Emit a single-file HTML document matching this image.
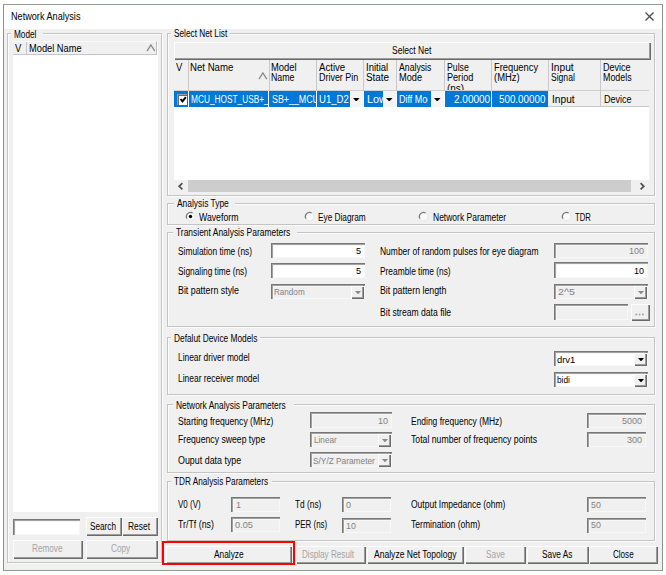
<!DOCTYPE html>
<html><head><meta charset="utf-8"><style>
html,body{margin:0;padding:0;background:#fff;width:666px;height:575px;overflow:hidden;position:relative}
.a{position:absolute;box-sizing:border-box}
.t{position:absolute;font-family:"Liberation Sans",sans-serif;font-size:9.5px;line-height:10px;white-space:nowrap;transform-origin:0 0}
</style></head><body>
<div class="a" style="left:3px;top:4px;width:660px;height:567px;border:1px solid #969f92;border-left-color:#7f978a;border-bottom-color:#919c8e;border-right-color:#8a948a;background:#f0f0f0;"></div>
<div class="a" style="left:4px;top:5px;width:658px;height:24px;background:#fff;"></div>
<div class="t" style="left:10.80px;top:12.40px;color:#000;transform:scaleX(0.9122);font-size:10.0px">Network Analysis</div>
<svg class="a" style="left:644px;top:11px" width="11" height="11"><path d="M1.5 1.5L9.5 9.5M9.5 1.5L1.5 9.5" stroke="#4a4a4a" stroke-width="1.25"/></svg>
<div class="a" style="left:7px;top:33px;width:155px;height:530px;border:1px solid #c4c4c4;box-shadow:inset 1px 1px 0 #fcfcfc,1px 1px 0 #fcfcfc;"></div>
<div class="a" style="left:10.9px;top:32px;width:32.1px;height:4px;background:#f0f0f0;"></div>
<div class="t" style="left:13.90px;top:29.70px;color:#000;transform:scaleX(0.8223);font-size:10.0px">Model</div>
<div class="a" style="left:13px;top:41px;width:145px;height:471px;background:#fff;"></div>
<div class="a" style="left:13px;top:41px;width:144px;height:14px;background:#f0f0f0;border-top:1px solid #fafafa;border-bottom:1px solid #c6c6c6;border-right:1px solid #bdbdbd;"></div>
<div class="a" style="left:26px;top:42px;width:1px;height:13px;background:#c4c4c4;"></div>
<div class="t" style="left:14.80px;top:44.00px;color:#000;transform:scaleX(0.9500);font-size:10.0px">V</div>
<div class="t" style="left:29.30px;top:44.00px;color:#000;transform:scaleX(0.9275);font-size:10.0px">Model Name</div>
<svg class="a" style="left:146px;top:44px" width="10" height="8"><path d="M1 7.2L4.9 0.9L8.8 7.2" stroke="#8a8a8a" stroke-width="1.3" fill="none"/></svg>
<div class="a" style="left:13px;top:519px;width:67px;height:16px;background:#fff;box-shadow:inset 1px 1px 0 #777,inset 2px 2px 0 #a2a2a2,inset 3px 3px 0 #f7f7f7,inset -1px -1px 0 #f8f8f8;"></div>
<div class="a" style="left:86px;top:517px;width:36px;height:19px;background:#f0f0f0;box-shadow:inset 1px 1px 0 #fdfdfd,inset -1px -1px 0 #6a6a6a,inset -2px -2px 0 #9c9c9c;"></div>
<div class="t" style="left:90.30px;top:521.70px;color:#000;transform:scaleX(0.8188);font-size:10.0px">Search</div>
<div class="a" style="left:122px;top:517px;width:36px;height:19px;background:#f0f0f0;box-shadow:inset 1px 1px 0 #fdfdfd,inset -1px -1px 0 #6a6a6a,inset -2px -2px 0 #9c9c9c;"></div>
<div class="t" style="left:127.90px;top:521.70px;color:#000;transform:scaleX(0.8414);font-size:10.0px">Reset</div>
<div class="a" style="left:13px;top:540px;width:70px;height:19px;background:#f0f0f0;box-shadow:inset 1px 1px 0 #fdfdfd,inset -1px -1px 0 #6a6a6a,inset -2px -2px 0 #9c9c9c;"></div>
<div class="t" style="left:31.70px;top:544.30px;color:#a4a4a4;transform:scaleX(0.8176);font-size:10.0px">Remove</div>
<div class="a" style="left:86px;top:540px;width:72px;height:19px;background:#f0f0f0;box-shadow:inset 1px 1px 0 #fdfdfd,inset -1px -1px 0 #6a6a6a,inset -2px -2px 0 #9c9c9c;"></div>
<div class="t" style="left:110.80px;top:544.30px;color:#a4a4a4;transform:scaleX(0.8218);font-size:10.0px">Copy</div>
<div class="a" style="left:167px;top:33px;width:488px;height:163px;border:1px solid #c4c4c4;box-shadow:inset 1px 1px 0 #fcfcfc,1px 1px 0 #fcfcfc;"></div>
<div class="a" style="left:171.2px;top:32px;width:58.80000000000001px;height:4px;background:#f0f0f0;"></div>
<div class="t" style="left:174.20px;top:29.20px;color:#000;transform:scaleX(0.8250);font-size:10.0px">Select Net List</div>
<div class="a" style="left:174px;top:42px;width:475px;height:138px;background:#fff;"></div>
<div class="a" style="left:174px;top:42px;width:477px;height:18px;background:#f0f0f0;box-shadow:inset 1px 1px 0 #fdfdfd,inset -1px -1px 0 #6a6a6a,inset -2px -2px 0 #9c9c9c;"></div>
<div class="t" style="left:391.90px;top:46.30px;color:#000;transform:scaleX(0.8514);font-size:10.0px">Select Net</div>
<div class="a" style="left:174px;top:60px;width:475px;height:31px;background:#f0f0f0;border-bottom:1px solid #cfcfcf;"></div>
<div class="a" style="left:188px;top:60px;width:1px;height:31px;background:#c8c8c8;"></div>
<div class="a" style="left:269px;top:60px;width:1px;height:31px;background:#c8c8c8;"></div>
<div class="a" style="left:316px;top:60px;width:1px;height:31px;background:#c8c8c8;"></div>
<div class="a" style="left:363px;top:60px;width:1px;height:31px;background:#c8c8c8;"></div>
<div class="a" style="left:396px;top:60px;width:1px;height:31px;background:#c8c8c8;"></div>
<div class="a" style="left:444px;top:60px;width:1px;height:31px;background:#c8c8c8;"></div>
<div class="a" style="left:491px;top:60px;width:1px;height:31px;background:#c8c8c8;"></div>
<div class="a" style="left:548px;top:60px;width:1px;height:31px;background:#c8c8c8;"></div>
<div class="a" style="left:600px;top:60px;width:1px;height:31px;background:#c8c8c8;"></div>
<div class="t" style="left:176.00px;top:62.60px;color:#000;transform:scaleX(0.9500);font-size:10.0px">V</div>
<div class="t" style="left:190.20px;top:62.60px;color:#000;transform:scaleX(0.9616);font-size:10.0px">Net Name</div>
<svg class="a" style="left:258px;top:71.5px" width="10" height="8"><path d="M1 7.2L4.9 0.9L8.8 7.2" stroke="#8a8a8a" stroke-width="1.3" fill="none"/></svg>
<div class="t" style="left:271.30px;top:62.60px;color:#000;transform:scaleX(0.9403);font-size:10.0px">Model</div>
<div class="t" style="left:271.30px;top:73.10px;color:#000;transform:scaleX(0.8796);font-size:10.0px">Name</div>
<div class="t" style="left:318.90px;top:62.60px;color:#000;transform:scaleX(0.9616);font-size:10.0px">Active</div>
<div class="t" style="left:318.90px;top:73.10px;color:#000;transform:scaleX(0.8945);font-size:10.0px">Driver Pin</div>
<div class="t" style="left:366.20px;top:62.60px;color:#000;transform:scaleX(0.9514);font-size:10.0px">Initial</div>
<div class="t" style="left:366.20px;top:73.10px;color:#000;transform:scaleX(0.9891);font-size:10.0px">State</div>
<div class="t" style="left:399.20px;top:62.60px;color:#000;transform:scaleX(0.8693);font-size:10.0px">Analysis</div>
<div class="t" style="left:399.20px;top:73.10px;color:#000;transform:scaleX(0.9225);font-size:10.0px">Mode</div>
<div class="t" style="left:446.80px;top:62.60px;color:#000;transform:scaleX(0.8699);font-size:10.0px">Pulse</div>
<div class="t" style="left:446.80px;top:73.10px;color:#000;transform:scaleX(0.9088);font-size:10.0px">Period</div>
<div class="t" style="left:493.80px;top:62.60px;color:#000;transform:scaleX(0.9324);font-size:10.0px">Frequency</div>
<div class="t" style="left:493.80px;top:73.10px;color:#000;transform:scaleX(0.9431);font-size:10.0px">(MHz)</div>
<div class="t" style="left:550.80px;top:62.60px;color:#000;transform:scaleX(1.0168);font-size:10.0px">Input</div>
<div class="t" style="left:550.80px;top:73.10px;color:#000;transform:scaleX(0.8562);font-size:10.0px">Signal</div>
<div class="t" style="left:602.80px;top:62.60px;color:#000;transform:scaleX(0.9019);font-size:10.0px">Device</div>
<div class="t" style="left:602.80px;top:73.10px;color:#000;transform:scaleX(0.8862);font-size:10.0px">Models</div>
<div class="a" style="left:445px;top:60px;width:46px;height:30px;overflow:hidden"><div class="t" style="left:1.80px;top:23.60px;color:#000;transform:scaleX(0.9971);font-size:10.0px">(ns)</div></div>
<div class="a" style="left:174px;top:91px;width:14px;height:16px;background:#0078d7;"></div>
<div class="a" style="left:177px;top:94px;width:10px;height:11px;background:#fff;box-shadow:inset 1px 1px 0 #9a9a9a,inset 2px 2px 0 #6a6a6a;"></div>
<svg class="a" style="left:178.5px;top:95px" width="9" height="9"><path d="M1.5 4L3.5 6.4L6.8 2.2" stroke="#000" stroke-width="1.9" fill="none"/></svg>
<div class="a" style="left:189px;top:91px;width:79px;height:16px;background:#0078d7;"></div>
<div class="a" style="left:189px;top:91px;width:79px;height:16px;overflow:hidden"><div class="t" style="left:1.60px;top:4.20px;color:#fff;transform:scaleX(0.8292);font-size:10.0px">MCU_HOST_USB+_DP</div></div>
<div class="a" style="left:269px;top:91px;width:47px;height:16px;background:#0078d7;"></div>
<div class="a" style="left:269px;top:91px;width:47px;height:16px;overflow:hidden"><div class="t" style="left:2.80px;top:4.20px;color:#fff;transform:scaleX(0.8848);font-size:10.0px">SB+__MCU_HOST</div></div>
<div class="a" style="left:317px;top:91px;width:33px;height:16px;background:#0078d7;"></div>
<div class="a" style="left:317px;top:91px;width:33px;height:16px;overflow:hidden"><div class="t" style="left:1.50px;top:4.20px;color:#fff;transform:scaleX(0.9536);font-size:10.0px">U1_D2</div></div>
<div class="a" style="left:364px;top:91px;width:19px;height:16px;background:#0078d7;"></div>
<div class="a" style="left:364px;top:91px;width:19px;height:16px;overflow:hidden"><div class="t" style="left:2.80px;top:4.20px;color:#fff;transform:scaleX(1.0809);font-size:10.0px">Low</div></div>
<div class="a" style="left:397px;top:91px;width:34px;height:16px;background:#0078d7;"></div>
<div class="a" style="left:397px;top:91px;width:31px;height:16px;overflow:hidden"><div class="t" style="left:2.20px;top:4.20px;color:#fff;transform:scaleX(0.8977);font-size:10.0px">Diff Mode</div></div>
<div class="a" style="left:445px;top:91px;width:46px;height:16px;background:#0078d7;"></div>
<div class="t" style="left:453.70px;top:95.20px;color:#fff;transform:scaleX(0.9986);font-size:10.0px">2.00000</div>
<div class="a" style="left:492px;top:91px;width:56px;height:16px;background:#0078d7;"></div>
<div class="t" style="left:499.30px;top:95.20px;color:#fff;transform:scaleX(0.9814);font-size:10.0px">500.00000</div>
<div class="a" style="left:350px;top:91px;width:13px;height:16px;background:#f4f4f4;"></div>
<svg class="a" style="left:353.25px;top:97.80px" width="6.5" height="3.6"><path d="M0 0H6.5L3.25 3.6Z" fill="#000"/></svg>
<div class="a" style="left:383px;top:91px;width:13px;height:16px;background:#f4f4f4;"></div>
<svg class="a" style="left:386.25px;top:97.80px" width="6.5" height="3.6"><path d="M0 0H6.5L3.25 3.6Z" fill="#000"/></svg>
<div class="a" style="left:431px;top:91px;width:13px;height:16px;background:#f4f4f4;"></div>
<svg class="a" style="left:434.25px;top:97.80px" width="6.5" height="3.6"><path d="M0 0H6.5L3.25 3.6Z" fill="#000"/></svg>
<div class="a" style="left:548px;top:91px;width:101px;height:16px;background:#f0f0f0;border-bottom:1px solid #c8c8c8;"></div>
<div class="a" style="left:600px;top:91px;width:1px;height:16px;background:#c8c8c8;"></div>
<div class="t" style="left:552.30px;top:95.20px;color:#000;transform:scaleX(1.0168);font-size:10.0px">Input</div>
<div class="t" style="left:604.30px;top:95.20px;color:#000;transform:scaleX(0.9019);font-size:10.0px">Device</div>
<div class="a" style="left:174px;top:180px;width:475px;height:12px;background:#f0f0f0;"></div>
<div class="a" style="left:188px;top:180px;width:443px;height:12px;background:#cdcdcd;"></div>
<svg class="a" style="left:177px;top:182px" width="8" height="9"><path d="M5.4 1.2L2.2 4.3L5.4 7.4" stroke="#505050" stroke-width="1.7" fill="none"/></svg>
<svg class="a" style="left:638px;top:182px" width="8" height="9"><path d="M2.6 1.2L5.8 4.3L2.6 7.4" stroke="#505050" stroke-width="1.7" fill="none"/></svg>
<div class="a" style="left:167px;top:203px;width:488px;height:22px;border:1px solid #c4c4c4;box-shadow:inset 1px 1px 0 #fcfcfc,1px 1px 0 #fcfcfc;"></div>
<div class="a" style="left:173.6px;top:202px;width:61.900000000000006px;height:4px;background:#f0f0f0;"></div>
<div class="t" style="left:176.60px;top:199.00px;color:#000;transform:scaleX(0.8421);font-size:10.0px">Analysis Type</div>
<svg class="a" style="left:184.90px;top:210.90px" width="11" height="11"><circle cx="5.5" cy="5.5" r="4.3" fill="#fafafa" stroke="#e8e8e8" stroke-width="1"/><path d="M2.0 7.6A4.1 4.1 0 0 1 7.6 2.0" stroke="#7a7a7a" stroke-width="1.3" fill="none"/><circle cx="5.5" cy="5.5" r="1.7" fill="#000"/></svg>
<div class="t" style="left:199.30px;top:212.50px;color:#000;transform:scaleX(0.8723);font-size:10.0px">Waveform</div>
<svg class="a" style="left:303.50px;top:210.90px" width="11" height="11"><circle cx="5.5" cy="5.5" r="4.3" fill="#fafafa" stroke="#e8e8e8" stroke-width="1"/><path d="M2.0 7.6A4.1 4.1 0 0 1 7.6 2.0" stroke="#7a7a7a" stroke-width="1.3" fill="none"/></svg>
<div class="t" style="left:317.50px;top:212.50px;color:#000;transform:scaleX(0.8257);font-size:10.0px">Eye Diagram</div>
<svg class="a" style="left:418.10px;top:210.90px" width="11" height="11"><circle cx="5.5" cy="5.5" r="4.3" fill="#fafafa" stroke="#e8e8e8" stroke-width="1"/><path d="M2.0 7.6A4.1 4.1 0 0 1 7.6 2.0" stroke="#7a7a7a" stroke-width="1.3" fill="none"/></svg>
<div class="t" style="left:432.50px;top:212.50px;color:#000;transform:scaleX(0.8492);font-size:10.0px">Network Parameter</div>
<svg class="a" style="left:560.60px;top:210.90px" width="11" height="11"><circle cx="5.5" cy="5.5" r="4.3" fill="#fafafa" stroke="#e8e8e8" stroke-width="1"/><path d="M2.0 7.6A4.1 4.1 0 0 1 7.6 2.0" stroke="#7a7a7a" stroke-width="1.3" fill="none"/></svg>
<div class="t" style="left:574.60px;top:212.50px;color:#000;transform:scaleX(0.7682);font-size:10.0px">TDR</div>
<div class="a" style="left:167px;top:232px;width:488px;height:95px;border:1px solid #c4c4c4;box-shadow:inset 1px 1px 0 #fcfcfc,1px 1px 0 #fcfcfc;"></div>
<div class="a" style="left:173.3px;top:231px;width:124.19999999999999px;height:4px;background:#f0f0f0;"></div>
<div class="t" style="left:176.30px;top:228.40px;color:#000;transform:scaleX(0.8445);font-size:10.0px">Transient Analysis Parameters</div>
<div class="t" style="left:178.00px;top:247.00px;color:#000;transform:scaleX(0.8380);font-size:10.0px">Simulation time (ns)</div>
<div class="t" style="left:177.80px;top:267.00px;color:#000;transform:scaleX(0.8337);font-size:10.0px">Signaling time (ns)</div>
<div class="t" style="left:178.20px;top:285.90px;color:#000;transform:scaleX(0.8845);font-size:10.0px">Bit pattern style</div>
<div class="a" style="left:271px;top:243px;width:94px;height:15px;background:#fff;box-shadow:inset 1px 1px 0 #777,inset 2px 2px 0 #a2a2a2,inset 3px 3px 0 #f7f7f7,inset -1px -1px 0 #f8f8f8;"></div>
<div class="t" style="left:356.05px;top:246.37px;color:#000;transform:scaleX(0.9500)">5</div>
<div class="a" style="left:271px;top:263px;width:94px;height:15px;background:#fff;box-shadow:inset 1px 1px 0 #777,inset 2px 2px 0 #a2a2a2,inset 3px 3px 0 #f7f7f7,inset -1px -1px 0 #f8f8f8;"></div>
<div class="t" style="left:356.05px;top:265.97px;color:#000;transform:scaleX(0.9500)">5</div>
<div class="a" style="left:271px;top:284px;width:94px;height:15px;background:#f0f0f0;box-shadow:inset 1px 1px 0 #777,inset 2px 2px 0 #a2a2a2,inset 3px 3px 0 #f7f7f7,inset -1px -1px 0 #f8f8f8;"></div>
<div class="a" style="left:351px;top:286px;width:13px;height:13px;background:#f0f0f0;box-shadow:inset 1px 1px 0 #fdfdfd,inset -1px -1px 0 #6a6a6a,inset -2px -2px 0 #9c9c9c;"></div>
<div class="a" style="left:363px;top:284px;width:1px;height:2px;background:#777;"></div>
<svg class="a" style="left:354.80px;top:291.00px" width="6.0" height="3.4"><path d="M0 0H6.0L3.0 3.4Z" fill="#8a8a8a"/></svg>
<div class="t" style="left:273.80px;top:287.47px;color:#828282;transform:scaleX(0.8529)">Random</div>
<div class="t" style="left:379.50px;top:246.90px;color:#000;transform:scaleX(0.8468);font-size:10.0px">Number of random pulses for eye diagram</div>
<div class="t" style="left:379.60px;top:267.20px;color:#000;transform:scaleX(0.8363);font-size:10.0px">Preamble time (ns)</div>
<div class="t" style="left:379.60px;top:286.00px;color:#000;transform:scaleX(0.8777);font-size:10.0px">Bit pattern length</div>
<div class="t" style="left:379.60px;top:307.70px;color:#000;transform:scaleX(0.8592);font-size:10.0px">Bit stream data file</div>
<div class="a" style="left:554px;top:243px;width:94px;height:15px;background:#f0f0f0;box-shadow:inset 1px 1px 0 #777,inset 2px 2px 0 #a2a2a2,inset 3px 3px 0 #f7f7f7,inset -1px -1px 0 #f8f8f8;"></div>
<div class="t" style="left:628.81px;top:246.27px;color:#828282;transform:scaleX(0.9500)">100</div>
<div class="a" style="left:554px;top:262px;width:94px;height:16px;background:#fff;box-shadow:inset 1px 1px 0 #777,inset 2px 2px 0 #a2a2a2,inset 3px 3px 0 #f7f7f7,inset -1px -1px 0 #f8f8f8;"></div>
<div class="t" style="left:633.83px;top:266.07px;color:#000;transform:scaleX(0.9500)">10</div>
<div class="a" style="left:554px;top:284px;width:94px;height:15px;background:#f0f0f0;box-shadow:inset 1px 1px 0 #777,inset 2px 2px 0 #a2a2a2,inset 3px 3px 0 #f7f7f7,inset -1px -1px 0 #f8f8f8;"></div>
<div class="a" style="left:634px;top:286px;width:13px;height:13px;background:#f0f0f0;box-shadow:inset 1px 1px 0 #fdfdfd,inset -1px -1px 0 #6a6a6a,inset -2px -2px 0 #9c9c9c;"></div>
<div class="a" style="left:646px;top:284px;width:1px;height:2px;background:#777;"></div>
<svg class="a" style="left:637.80px;top:291.00px" width="6.0" height="3.4"><path d="M0 0H6.0L3.0 3.4Z" fill="#8a8a8a"/></svg>
<div class="t" style="left:558.00px;top:287.47px;color:#828282;transform:scaleX(1.1193)">2^5</div>
<div class="a" style="left:554px;top:304px;width:74px;height:16px;background:#f0f0f0;box-shadow:inset 1px 1px 0 #777,inset 2px 2px 0 #a2a2a2,inset 3px 3px 0 #f7f7f7,inset -1px -1px 0 #f8f8f8;"></div>
<div class="a" style="left:631px;top:304px;width:19px;height:17px;background:#f0f0f0;box-shadow:inset 1px 1px 0 #fdfdfd,inset -1px -1px 0 #6a6a6a,inset -2px -2px 0 #9c9c9c;"></div>
<svg class="a" style="left:634px;top:312px" width="12" height="5"><circle cx="2.3" cy="2.5" r="0.95" fill="#a4a4a4"/><circle cx="5.6" cy="2.5" r="0.95" fill="#a4a4a4"/><circle cx="8.9" cy="2.5" r="0.95" fill="#a4a4a4"/></svg>
<div class="a" style="left:167px;top:337px;width:488px;height:58px;border:1px solid #c4c4c4;box-shadow:inset 1px 1px 0 #fcfcfc,1px 1px 0 #fcfcfc;"></div>
<div class="a" style="left:170.6px;top:336px;width:89.4px;height:4px;background:#f0f0f0;"></div>
<div class="t" style="left:173.60px;top:333.60px;color:#000;transform:scaleX(0.8334);font-size:10.0px">Defalut Device Models</div>
<div class="t" style="left:178.10px;top:352.90px;color:#000;transform:scaleX(0.8376);font-size:10.0px">Linear driver model</div>
<div class="t" style="left:178.10px;top:374.40px;color:#000;transform:scaleX(0.8434);font-size:10.0px">Linear receiver model</div>
<div class="a" style="left:554px;top:351px;width:94px;height:15px;background:#fff;box-shadow:inset 1px 1px 0 #777,inset 2px 2px 0 #a2a2a2,inset 3px 3px 0 #f7f7f7,inset -1px -1px 0 #f8f8f8;"></div>
<div class="a" style="left:634px;top:353px;width:13px;height:13px;background:#f0f0f0;box-shadow:inset 1px 1px 0 #fdfdfd,inset -1px -1px 0 #6a6a6a,inset -2px -2px 0 #9c9c9c;"></div>
<div class="a" style="left:646px;top:351px;width:1px;height:2px;background:#777;"></div>
<svg class="a" style="left:637.80px;top:358.00px" width="6.0" height="3.4"><path d="M0 0H6.0L3.0 3.4Z" fill="#000"/></svg>
<div class="t" style="left:556.50px;top:355.17px;color:#000;transform:scaleX(0.9892)">drv1</div>
<div class="a" style="left:554px;top:372px;width:94px;height:15px;background:#fff;box-shadow:inset 1px 1px 0 #777,inset 2px 2px 0 #a2a2a2,inset 3px 3px 0 #f7f7f7,inset -1px -1px 0 #f8f8f8;"></div>
<div class="a" style="left:634px;top:374px;width:13px;height:13px;background:#f0f0f0;box-shadow:inset 1px 1px 0 #fdfdfd,inset -1px -1px 0 #6a6a6a,inset -2px -2px 0 #9c9c9c;"></div>
<div class="a" style="left:646px;top:372px;width:1px;height:2px;background:#777;"></div>
<svg class="a" style="left:637.80px;top:379.00px" width="6.0" height="3.4"><path d="M0 0H6.0L3.0 3.4Z" fill="#000"/></svg>
<div class="t" style="left:556.50px;top:374.97px;color:#000;transform:scaleX(0.8721)">bidi</div>
<div class="a" style="left:167px;top:404px;width:488px;height:69px;border:1px solid #c4c4c4;box-shadow:inset 1px 1px 0 #fcfcfc,1px 1px 0 #fcfcfc;"></div>
<div class="a" style="left:173.3px;top:403px;width:120.69999999999999px;height:4px;background:#f0f0f0;"></div>
<div class="t" style="left:176.30px;top:400.50px;color:#000;transform:scaleX(0.8401);font-size:10.0px">Network Analysis Parameters</div>
<div class="t" style="left:177.80px;top:417.30px;color:#000;transform:scaleX(0.8587);font-size:10.0px">Starting frequency (MHz)</div>
<div class="t" style="left:177.80px;top:435.30px;color:#000;transform:scaleX(0.8673);font-size:10.0px">Frequency sweep type</div>
<div class="t" style="left:177.80px;top:455.50px;color:#000;transform:scaleX(0.8890);font-size:10.0px">Ouput data type</div>
<div class="a" style="left:310px;top:412px;width:82px;height:16px;background:#f0f0f0;box-shadow:inset 1px 1px 0 #777,inset 2px 2px 0 #a2a2a2,inset 3px 3px 0 #f7f7f7,inset -1px -1px 0 #f8f8f8;"></div>
<div class="t" style="left:378.03px;top:416.07px;color:#828282;transform:scaleX(0.9500)">10</div>
<div class="a" style="left:310px;top:432px;width:82px;height:15px;background:#f0f0f0;box-shadow:inset 1px 1px 0 #777,inset 2px 2px 0 #a2a2a2,inset 3px 3px 0 #f7f7f7,inset -1px -1px 0 #f8f8f8;"></div>
<div class="a" style="left:378px;top:434px;width:13px;height:13px;background:#f0f0f0;box-shadow:inset 1px 1px 0 #fdfdfd,inset -1px -1px 0 #6a6a6a,inset -2px -2px 0 #9c9c9c;"></div>
<div class="a" style="left:390px;top:432px;width:1px;height:2px;background:#777;"></div>
<svg class="a" style="left:381.80px;top:439.00px" width="6.0" height="3.4"><path d="M0 0H6.0L3.0 3.4Z" fill="#8a8a8a"/></svg>
<div class="t" style="left:313.80px;top:434.67px;color:#828282;transform:scaleX(0.8611)">Linear</div>
<div class="a" style="left:310px;top:452px;width:82px;height:15px;background:#f0f0f0;box-shadow:inset 1px 1px 0 #777,inset 2px 2px 0 #a2a2a2,inset 3px 3px 0 #f7f7f7,inset -1px -1px 0 #f8f8f8;"></div>
<div class="a" style="left:378px;top:454px;width:13px;height:13px;background:#f0f0f0;box-shadow:inset 1px 1px 0 #fdfdfd,inset -1px -1px 0 #6a6a6a,inset -2px -2px 0 #9c9c9c;"></div>
<div class="a" style="left:390px;top:452px;width:1px;height:2px;background:#777;"></div>
<svg class="a" style="left:381.80px;top:459.00px" width="6.0" height="3.4"><path d="M0 0H6.0L3.0 3.4Z" fill="#8a8a8a"/></svg>
<div class="t" style="left:312.50px;top:455.97px;color:#828282;transform:scaleX(0.8742)">S/Y/Z Parameter</div>
<div class="t" style="left:410.60px;top:417.30px;color:#000;transform:scaleX(0.8453);font-size:10.0px">Ending frequency (MHz)</div>
<div class="t" style="left:410.60px;top:435.30px;color:#000;transform:scaleX(0.8683);font-size:10.0px">Total number of frequency points</div>
<div class="a" style="left:587px;top:413px;width:59px;height:15px;background:#f0f0f0;box-shadow:inset 1px 1px 0 #777,inset 2px 2px 0 #a2a2a2,inset 3px 3px 0 #f7f7f7,inset -1px -1px 0 #f8f8f8;"></div>
<div class="t" style="left:622.19px;top:416.07px;color:#828282;transform:scaleX(0.9500)">5000</div>
<div class="a" style="left:587px;top:432px;width:59px;height:15px;background:#f0f0f0;box-shadow:inset 1px 1px 0 #777,inset 2px 2px 0 #a2a2a2,inset 3px 3px 0 #f7f7f7,inset -1px -1px 0 #f8f8f8;"></div>
<div class="t" style="left:627.21px;top:434.97px;color:#828282;transform:scaleX(0.9500)">300</div>
<div class="a" style="left:167px;top:481px;width:488px;height:60px;border:1px solid #c4c4c4;box-shadow:inset 1px 1px 0 #fcfcfc,1px 1px 0 #fcfcfc;"></div>
<div class="a" style="left:171.0px;top:480px;width:100.80000000000001px;height:4px;background:#f0f0f0;"></div>
<div class="t" style="left:174.00px;top:476.90px;color:#000;transform:scaleX(0.8214);font-size:10.0px">TDR Analysis Parameters</div>
<div class="t" style="left:178.20px;top:499.70px;color:#000;transform:scaleX(0.8023);font-size:10.0px">V0 (V)</div>
<div class="t" style="left:178.20px;top:520.00px;color:#000;transform:scaleX(0.8802);font-size:10.0px">Tr/Tf (ns)</div>
<div class="a" style="left:231px;top:497px;width:49px;height:15px;background:#f0f0f0;box-shadow:inset 1px 1px 0 #777,inset 2px 2px 0 #a2a2a2,inset 3px 3px 0 #f7f7f7,inset -1px -1px 0 #f8f8f8;"></div>
<div class="t" style="left:236.00px;top:499.67px;color:#828282;transform:scaleX(0.9500)">1</div>
<div class="a" style="left:231px;top:517px;width:49px;height:15px;background:#f0f0f0;box-shadow:inset 1px 1px 0 #777,inset 2px 2px 0 #a2a2a2,inset 3px 3px 0 #f7f7f7,inset -1px -1px 0 #f8f8f8;"></div>
<div class="t" style="left:234.70px;top:520.27px;color:#828282;transform:scaleX(0.9722)">0.05</div>
<div class="t" style="left:295.30px;top:499.90px;color:#000;transform:scaleX(0.8318);font-size:10.0px">Td (ns)</div>
<div class="t" style="left:295.30px;top:520.30px;color:#000;transform:scaleX(0.7923);font-size:10.0px">PER (ns)</div>
<div class="a" style="left:342px;top:497px;width:49px;height:15px;background:#f0f0f0;box-shadow:inset 1px 1px 0 #777,inset 2px 2px 0 #a2a2a2,inset 3px 3px 0 #f7f7f7,inset -1px -1px 0 #f8f8f8;"></div>
<div class="t" style="left:346.20px;top:499.77px;color:#828282;transform:scaleX(0.9500)">0</div>
<div class="a" style="left:342px;top:518px;width:49px;height:15px;background:#f0f0f0;box-shadow:inset 1px 1px 0 #777,inset 2px 2px 0 #a2a2a2,inset 3px 3px 0 #f7f7f7,inset -1px -1px 0 #f8f8f8;"></div>
<div class="t" style="left:346.20px;top:520.57px;color:#828282;transform:scaleX(0.9238)">10</div>
<div class="t" style="left:411.30px;top:499.90px;color:#000;transform:scaleX(0.8496);font-size:10.0px">Output Impedance (ohm)</div>
<div class="t" style="left:411.30px;top:520.40px;color:#000;transform:scaleX(0.8581);font-size:10.0px">Termination (ohm)</div>
<div class="a" style="left:587px;top:497px;width:59px;height:15px;background:#f0f0f0;box-shadow:inset 1px 1px 0 #777,inset 2px 2px 0 #a2a2a2,inset 3px 3px 0 #f7f7f7,inset -1px -1px 0 #f8f8f8;"></div>
<div class="t" style="left:590.90px;top:499.67px;color:#828282;transform:scaleX(0.9238)">50</div>
<div class="a" style="left:587px;top:518px;width:59px;height:15px;background:#f0f0f0;box-shadow:inset 1px 1px 0 #777,inset 2px 2px 0 #a2a2a2,inset 3px 3px 0 #f7f7f7,inset -1px -1px 0 #f8f8f8;"></div>
<div class="t" style="left:590.90px;top:520.47px;color:#828282;transform:scaleX(0.9238)">50</div>
<div class="a" style="left:166px;top:546px;width:126px;height:18px;background:#f0f0f0;box-shadow:inset 1px 1px 0 #fdfdfd,inset -1px -1px 0 #6a6a6a,inset -2px -2px 0 #9c9c9c;"></div>
<div class="t" style="left:214.00px;top:549.90px;color:#000;transform:scaleX(0.8334);font-size:10.0px">Analyze</div>
<div class="a" style="left:162px;top:541px;width:133px;height:24px;border:2px solid #f00;"></div>
<div class="a" style="left:296px;top:546px;width:70px;height:18px;background:#f0f0f0;box-shadow:inset 1px 1px 0 #fdfdfd,inset -1px -1px 0 #6a6a6a,inset -2px -2px 0 #9c9c9c;"></div>
<div class="t" style="left:302.10px;top:549.90px;color:#a4a4a4;transform:scaleX(0.8135);font-size:10.0px">Display Result</div>
<div class="a" style="left:367px;top:546px;width:97px;height:18px;background:#f0f0f0;box-shadow:inset 1px 1px 0 #fdfdfd,inset -1px -1px 0 #6a6a6a,inset -2px -2px 0 #9c9c9c;"></div>
<div class="t" style="left:373.50px;top:549.90px;color:#000;transform:scaleX(0.8548);font-size:10.0px">Analyze Net Topology</div>
<div class="a" style="left:465px;top:546px;width:61px;height:18px;background:#f0f0f0;box-shadow:inset 1px 1px 0 #fdfdfd,inset -1px -1px 0 #6a6a6a,inset -2px -2px 0 #9c9c9c;"></div>
<div class="t" style="left:485.80px;top:549.90px;color:#a4a4a4;transform:scaleX(0.8313);font-size:10.0px">Save</div>
<div class="a" style="left:527px;top:546px;width:62px;height:18px;background:#f0f0f0;box-shadow:inset 1px 1px 0 #fdfdfd,inset -1px -1px 0 #6a6a6a,inset -2px -2px 0 #9c9c9c;"></div>
<div class="t" style="left:541.50px;top:549.90px;color:#000;transform:scaleX(0.8292);font-size:10.0px">Save As</div>
<div class="a" style="left:589px;top:546px;width:69px;height:18px;background:#f0f0f0;box-shadow:inset 1px 1px 0 #fdfdfd,inset -1px -1px 0 #6a6a6a,inset -2px -2px 0 #9c9c9c;"></div>
<div class="t" style="left:612.90px;top:549.90px;color:#000;transform:scaleX(0.8073);font-size:10.0px">Close</div>
</body></html>
